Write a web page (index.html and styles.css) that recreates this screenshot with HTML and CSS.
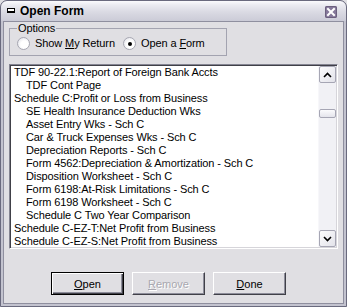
FILE: index.html
```html
<!DOCTYPE html>
<html lang="en">
<head>
    <meta charset="UTF-8">
    <title>Open Form</title>
    <link rel="stylesheet" href="styles.css">
</head>
<body>
    <div class="window">
        <div class="titlebar">
            <span class="sys-icon"></span>
            <span class="title">Open Form</span>
            <span class="close-btn">
                <svg width="12" height="12" viewBox="0 0 12 12">
                    <path d="M3 3 L9 9 M9 3 L3 9" stroke="#fff" stroke-width="2" stroke-linecap="square"/>
                </svg>
            </span>
        </div>

        <div class="content">
            <fieldset class="options">
                <legend>Options</legend>
                <label class="radio"><span class="radio-dot"></span><span>Show <u>M</u>y Return</span></label>
                <label class="radio checked"><span class="radio-dot"></span><span>Open a <u>F</u>orm</span></label>
            </fieldset>

            <div class="listbox">
                <ul class="items">
                    <li>TDF 90-22.1:Report of Foreign Bank Accts</li>
                    <li class="sub">TDF Cont Page</li>
                    <li>Schedule C:Profit or Loss from Business</li>
                    <li class="sub">SE Health Insurance Deduction Wks</li>
                    <li class="sub">Asset Entry Wks - Sch C</li>
                    <li class="sub">Car &amp; Truck Expenses Wks - Sch C</li>
                    <li class="sub">Depreciation Reports - Sch C</li>
                    <li class="sub">Form 4562:Depreciation &amp; Amortization - Sch C</li>
                    <li class="sub">Disposition Worksheet - Sch C</li>
                    <li class="sub">Form 6198:At-Risk Limitations - Sch C</li>
                    <li class="sub">Form 6198 Worksheet - Sch C</li>
                    <li class="sub">Schedule C Two Year Comparison</li>
                    <li>Schedule C-EZ-T:Net Profit from Business</li>
                    <li>Schedule C-EZ-S:Net Profit from Business</li>
                </ul>
                <div class="scrollbar">
                    <div class="arrow">
                        <svg width="9" height="6" viewBox="0 0 9 6"><path d="M1 5 L4.5 1.5 L8 5" fill="none" stroke="#000" stroke-width="1.6"/></svg>
                    </div>
                    <div class="track">
                        <div class="thumb"></div>
                    </div>
                    <div class="arrow">
                        <svg width="9" height="6" viewBox="0 0 9 6"><path d="M1 1 L4.5 4.5 L8 1" fill="none" stroke="#000" stroke-width="1.6"/></svg>
                    </div>
                </div>
            </div>

            <div class="buttons">
                <button class="btn default"><u>O</u>pen</button>
                <button class="btn" disabled><u>R</u>emove</button>
                <button class="btn"><u>D</u>one</button>
            </div>
        </div>
    </div>
</body>
</html>
```

FILE: styles.css
```css
body {
    margin: 0;
    padding: 0;
    font-family: 'Liberation Sans', Arial, sans-serif;
    font-size: 11px;
    letter-spacing: -0.1px;
    color: #000;
    background-color: #e0dfe3;
}

.window {
    width: 347px;
    height: 307px;
    box-sizing: border-box;
    border: 1px solid #6a6a7e;
    border-radius: 7px 7px 0 0;
    background-color: #c3c3cf;
    padding: 0 2px 2px;
    display: flex;
    flex-direction: column;
    overflow: hidden;
}

.titlebar {
    height: 20px;
    margin: 0 -2px;
    padding: 0 5px;
    display: flex;
    align-items: center;
    background: linear-gradient(#fbfbfd 0%, #ebebf1 20%, #dadae3 55%, #cbcbd7 100%);
    border-radius: 6px 6px 0 0;
}

.sys-icon {
    width: 6px;
    height: 2px;
    border: 1px solid #000;
    border-bottom-width: 2px;
    background-color: #fff;
    margin-left: 1px;
    margin-right: 5px;
    margin-top: -1px;
}

.title {
    font-weight: bold;
    font-size: 12px;
    letter-spacing: 0;
    flex: 1;
}

.close-btn {
    width: 12px;
    height: 12px;
    border-radius: 2px;
    background-color: #85789a;
    box-shadow: inset 0 0 0 1px #6b5f7e;
    display: flex;
    margin-right: 4px;
    margin-top: 1px;
}

.content {
    flex: 1;
    background-color: #e0dfe3;
    border: 1px solid #8f8f9f;
    padding: 0 5px;
    display: flex;
    flex-direction: column;
}

.options {
    width: 218px;
    box-sizing: border-box;
    margin: 0;
    padding: 1px 7px 5px;
    border: 1px solid #a3a3b0;
    display: flex;
    gap: 8px;
}

.options legend {
    padding: 0 1px;
    line-height: 13px;
}

.radio {
    display: flex;
    align-items: center;
    height: 14px;
}

.radio-dot {
    width: 11px;
    height: 11px;
    border: 1px solid #a7a7b2;
    border-radius: 50%;
    background: radial-gradient(circle at 60% 60%, #fff 40%, #d9d9e2 100%);
    margin-right: 5px;
    position: relative;
}

.radio.checked .radio-dot::after {
    content: "";
    position: absolute;
    left: 4px;
    top: 4px;
    width: 4px;
    height: 4px;
    border-radius: 50%;
    background-color: #000;
}

.listbox {
    margin-top: 8px;
    height: 185px;
    box-sizing: border-box;
    border: 1px solid;
    border-color: #858592 #fff #fff #858592;
    box-shadow: inset 1px 1px 0 #404048, inset -1px -1px 0 #d6d5da;
    background-color: #fff;
    padding: 1px;
    display: flex;
}

.items {
    flex: 1;
    list-style: none;
    margin: 0;
    padding: 0;
}

.items li {
    line-height: 13px;
    padding-left: 3px;
    white-space: nowrap;
}

.items li.sub {
    padding-left: 15px;
}

.scrollbar {
    width: 17px;
    display: flex;
    flex-direction: column;
    background-color: #f1f1f5;
    border-left: 1px solid #f7f7fa;
}

.arrow {
    height: 17px;
    box-sizing: border-box;
    border: 1px solid #a6a6b4;
    border-radius: 2px;
    background: linear-gradient(135deg, #fcfcfd, #e3e3ea);
    display: flex;
    justify-content: center;
    align-items: center;
}

.track {
    flex: 1;
    padding-top: 26px;
}

.thumb {
    height: 9px;
    box-sizing: border-box;
    border: 1px solid #a6a6b4;
    border-radius: 2px;
    background: linear-gradient(#fbfbfd, #e4e4eb);
}

.buttons {
    display: flex;
    gap: 8px;
    margin-top: 23px;
    margin-left: 42px;
}

.btn {
    width: 73px;
    height: 23px;
    font-family: 'Liberation Sans', Arial, sans-serif;
    font-size: 11px;
    color: #000;
    background-color: #e0dfe3;
    border: 1px solid;
    border-color: #fff #404048 #404048 #fff;
    box-shadow: inset -1px -1px 0 #8d8d9a;
    padding: 0;
}

.btn.default {
    border: 1px solid #000;
    box-shadow: inset 1px 1px 0 #fff, inset -1px -1px 0 #404048, inset -2px -2px 0 #8d8d9a;
}

.btn:disabled {
    color: #a9a8b0;
    text-shadow: 1px 1px 0 #fff;
}
```
